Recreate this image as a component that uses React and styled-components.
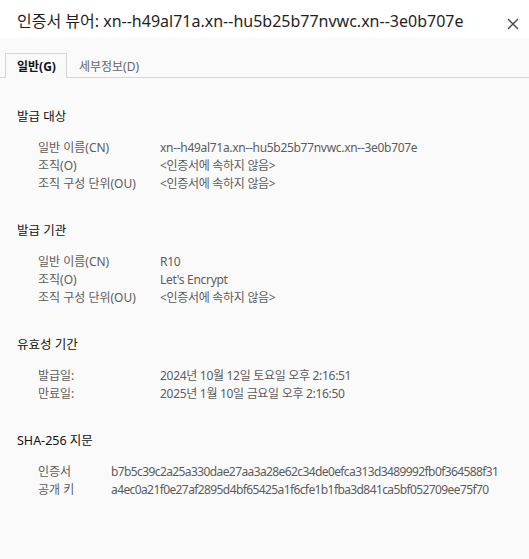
import React from 'react'
import styled, { createGlobalStyle } from 'styled-components'

const GlobalStyle = createGlobalStyle`
    html, body {
        margin: 0;
        padding: 0;
        background: #fafafa;
    }
    body {
        font-family: "Noto Sans", "Noto Sans CJK KR", sans-serif;
    }
`;

const Dialog = styled.div`
    width: 529px;
    height: 559px;
    background: #fafafa;
    display: flex;
    flex-direction: column;
    overflow: hidden;
`;

const TitleBar = styled.div`
    height: 38px;
    background: #ffffff;
    display: flex;
    align-items: flex-start;
    padding: 10px 7px 0 17px;
    box-sizing: border-box;
`;

const Title = styled.div`
    flex: 1;
    min-width: 0;
    font-size: 16px;
    line-height: 22px;
    color: #1f1f1f;
    white-space: nowrap;
`;

const CloseButton = styled.div`
    flex: 0 0 18px;
    height: 18px;
    margin-top: 5px;
`;

const TabBar = styled.div`
    display: flex;
    align-items: flex-end;
    margin-top: 14px;
    padding-left: 5px;
    border-bottom: 1px solid #d6d6d6;
    height: 25px;
`;

const Tab = styled.div`
    height: ${p => (p.active ? '25px' : '24px')};
    margin-bottom: ${p => (p.active ? '-1px' : '0')};
    padding: 0 10px 0 11px;
    display: flex;
    align-items: center;
    font-size: 12px;
    font-weight: ${p => (p.active ? 700 : 400)};
    color: ${p => (p.active ? '#111' : '#666')};
    background: #fafafa;
    border: ${p => (p.active ? '1px solid #d6d6d6' : '1px solid transparent')};
    border-bottom: none;
    box-sizing: border-box;
`;

const Content = styled.div`
    padding: 30px 0 0 17px;
    display: flex;
    flex-direction: column;
`;

const Section = styled.div`
    margin-bottom: 29px;
`;

const Heading = styled.div`
    font-size: 12.5px;
    color: #111;
    height: 18px;
    line-height: 18px;
    margin-bottom: 13px;
`;

const Rows = styled.div`
    display: grid;
    grid-template-columns: ${p => p.labelWidth}px auto;
    padding-left: 21px;
`;

const Cell = styled.div`
    font-size: 12px;
    line-height: 18px;
    color: #5c5c5c;
    white-space: nowrap;
    letter-spacing: ${p => p.spacing || 0}px;
`;

const sections = [
    {
        title: '발급 대상',
        labelWidth: 122,
        rows: [
            ['일반 이름(CN)', 'xn--h49al71a.xn--hu5b25b77nvwc.xn--3e0b707e'],
            ['조직(O)', '<인증서에 속하지 않음>'],
            ['조직 구성 단위(OU)', '<인증서에 속하지 않음>'],
        ],
    },
    {
        title: '발급 기관',
        labelWidth: 122,
        rows: [
            ['일반 이름(CN)', 'R10'],
            ['조직(O)', "Let's Encrypt"],
            ['조직 구성 단위(OU)', '<인증서에 속하지 않음>'],
        ],
    },
    {
        title: '유효성 기간',
        labelWidth: 122,
        rows: [
            ['발급일:', '2024년 10월 12일 토요일 오후 2:16:51'],
            ['만료일:', '2025년 1월 10일 금요일 오후 2:16:50'],
        ],
    },
    {
        title: 'SHA-256 지문',
        labelWidth: 73,
        valueSpacing: -0.6,
        rows: [
            ['인증서', 'b7b5c39c2a25a330dae27aa3a28e62c34de0efca313d3489992fb0f364588f31'],
            ['공개 키', 'a4ec0a21f0e27af2895d4bf65425a1f6cfe1b1fba3d841ca5bf052709ee75f70'],
        ],
    },
];

const App = () => (
    <Dialog>
        <GlobalStyle />
        <TitleBar>
            <Title>인증서 뷰어: xn--h49al71a.xn--hu5b25b77nvwc.xn--3e0b707e</Title>
            <CloseButton>
                <svg width="18" height="18" viewBox="0 0 18 18" style={{ display: 'block' }}>
                    <path d="M4 4L14 14M14 4L4 14" stroke="#4a4a4a" strokeWidth="1.4" />
                </svg>
            </CloseButton>
        </TitleBar>
        <TabBar>
            <Tab active>일반(G)</Tab>
            <Tab>세부정보(D)</Tab>
        </TabBar>
        <Content>
            {sections.map((section, index) => (
                <Section key={`Section-${index}`}>
                    <Heading>{section.title}</Heading>
                    <Rows labelWidth={section.labelWidth}>
                        {section.rows.map(([label, value], i) => (
                            <React.Fragment key={`Row-${i}`}>
                                <Cell>{label}</Cell>
                                <Cell spacing={section.valueSpacing ?? -0.3}>{value}</Cell>
                            </React.Fragment>
                        ))}
                    </Rows>
                </Section>
            ))}
        </Content>
    </Dialog>
)

export default App
